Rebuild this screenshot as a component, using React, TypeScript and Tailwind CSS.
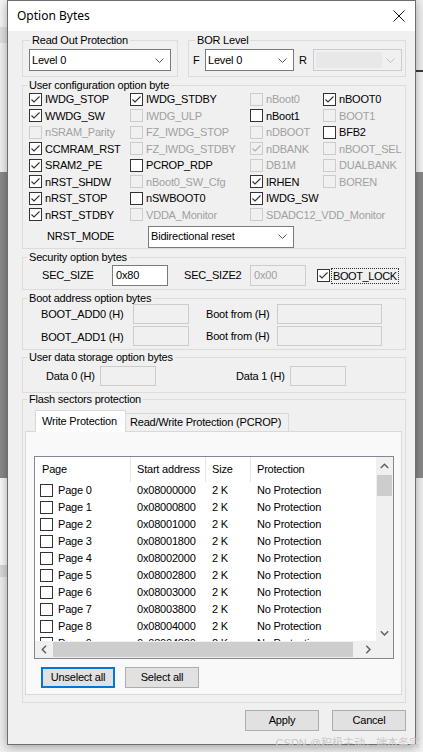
import React from "react";

type BoxProps = { checked?: boolean; disabled?: boolean };

function Box({ checked, disabled }: BoxProps) {
  return (
    <span
      className={`w-[13px] h-[13px] shrink-0 border flex items-center justify-center ${
        disabled ? "border-[#cccccc] bg-[#f0f0f0]" : "border-[#333333] bg-white"
      }`}
    >
      {checked && (
        <svg width="11" height="11" viewBox="0 0 11 11">
          <polyline
            points="1.5,5.5 4,8 9.5,2.5"
            fill="none"
            stroke={disabled ? "#b0b0b0" : "#333333"}
            strokeWidth="1.1"
          />
        </svg>
      )}
    </span>
  );
}

type ChkProps = { label: string; checked?: boolean; disabled?: boolean };

function Chk({ label, checked, disabled }: ChkProps) {
  return (
    <div className="flex items-center gap-[3px] h-full whitespace-nowrap">
      <Box checked={checked} disabled={disabled} />
      <span className={disabled ? "text-[#a0a0a0]" : "text-black"}>{label}</span>
    </div>
  );
}

function ChevronDown({ color = "#555555" }: { color?: string }) {
  return (
    <svg width="9" height="5" viewBox="0 0 9 5">
      <polyline points="0.5,0.5 4.5,4.5 8.5,0.5" fill="none" stroke={color} strokeWidth="1" />
    </svg>
  );
}

function ScrollArrow({ dir }: { dir: "up" | "down" | "left" | "right" }) {
  const pts =
    dir === "up"
      ? "0.8,5 4.5,1.3 8.2,5"
      : dir === "down"
      ? "0.8,1.3 4.5,5 8.2,1.3"
      : dir === "left"
      ? "5,0.8 1.3,4.5 5,8.2"
      : "1.3,0.8 5,4.5 1.3,8.2";
  const w = dir === "up" || dir === "down" ? 9 : 6;
  const h = dir === "up" || dir === "down" ? 6 : 9;
  return (
    <svg width={w} height={h} viewBox={`0 0 ${w} ${h}`}>
      <polyline points={pts} fill="none" stroke="#606060" strokeWidth="1.5" />
    </svg>
  );
}

function Combo({ value, className }: { value: string; className: string }) {
  return (
    <div
      className={`h-[22px] border border-[#7a7a7a] bg-white flex items-center justify-between pl-[2px] pr-[6px] ${className}`}
    >
      <span className="whitespace-nowrap">{value}</span>
      <ChevronDown />
    </div>
  );
}

function DisabledCombo({ className }: { className: string }) {
  return (
    <div className={`h-[22px] border border-[#cccccc] bg-[#f0f0f0] flex items-center p-[2px] pr-[6px] ${className}`}>
      <div className="h-full w-[66px] bg-[#e8e8e8]" />
      <div className="flex-1" />
      <ChevronDown color="#c0c0c0" />
    </div>
  );
}

function Input({ value, disabled, className }: { value?: string; disabled?: boolean; className: string }) {
  return (
    <div
      className={`border flex items-center pl-[3px] ${
        disabled ? "border-[#cccccc] bg-[#f0f0f0] text-[#a0a0a0]" : "border-[#7a7a7a] bg-white text-black"
      } ${className}`}
    >
      {value}
    </div>
  );
}

const userCfg: (ChkProps | null)[][] = [
  [
    { label: "IWDG_STOP", checked: true },
    { label: "IWDG_STDBY", checked: true },
    { label: "nBoot0", disabled: true },
    { label: "nBOOT0", checked: true },
  ],
  [
    { label: "WWDG_SW", checked: true },
    { label: "IWDG_ULP", disabled: true },
    { label: "nBoot1" },
    { label: "BOOT1", disabled: true },
  ],
  [
    { label: "nSRAM_Parity", disabled: true },
    { label: "FZ_IWDG_STOP", disabled: true },
    { label: "nDBOOT", disabled: true },
    { label: "BFB2" },
  ],
  [
    { label: "CCMRAM_RST", checked: true },
    { label: "FZ_IWDG_STDBY", disabled: true },
    { label: "nDBANK", disabled: true, checked: true },
    { label: "nBOOT_SEL", disabled: true },
  ],
  [
    { label: "SRAM2_PE", checked: true },
    { label: "PCROP_RDP" },
    { label: "DB1M", disabled: true },
    { label: "DUALBANK", disabled: true },
  ],
  [
    { label: "nRST_SHDW", checked: true },
    { label: "nBoot0_SW_Cfg", disabled: true },
    { label: "IRHEN", checked: true },
    { label: "BOREN", disabled: true },
  ],
  [
    { label: "nRST_STOP", checked: true },
    { label: "nSWBOOT0" },
    { label: "IWDG_SW", checked: true },
    null,
  ],
  [
    { label: "nRST_STDBY", checked: true },
    { label: "VDDA_Monitor", disabled: true },
    { label: "SDADC12_VDD_Monitor", disabled: true },
    null,
  ],
];

const pages = Array.from({ length: 10 }, (_, i) => ({
  name: `Page ${i}`,
  addr: "0x" + (0x08000000 + i * 0x800).toString(16).toUpperCase().padStart(8, "0"),
}));

function Btn({ label, focused, className = "" }: { label: string; focused?: boolean; className?: string }) {
  return (
    <div
      className={`w-[74px] h-[21px] bg-[#e1e1e1] flex items-center justify-center ${
        focused ? "border-2 border-[#0078d7]" : "border border-[#adadad]"
      } ${className}`}
    >
      {label}
    </div>
  );
}

export default function App() {
  return (
    <div className="relative w-[423px] h-[752px] overflow-hidden flex bg-[#f0f0f0] font-['Liberation_Sans',Arial,sans-serif] text-[11px] tracking-[-0.2px] text-black">
      {/* left background strip */}
      <div className="w-[7px] shrink-0 flex flex-col">
        <div className="h-[27px] bg-[#f7f7f7]" />
        <div className="h-[16px] bg-[#e2e2e2]" />
        <div className="h-[129px] bg-[#f3f3f3]" />
        <div className="h-[306px] bg-[#8a8a8a]" />
        <div className="h-[87px] bg-[#fbfbfb]" />
        <div className="h-[12px] bg-[#dadada]" />
        <div className="flex-1 bg-[#f0f0f0]" />
      </div>

      {/* dialog */}
      <div className="relative z-10 w-[409px] h-[745px] shrink-0 border border-[#6e6e6e] bg-[#f0f0f0] flex flex-col shadow-[0_2px_10px_rgba(0,0,0,0.35)]">
        {/* title bar */}
        <div className="h-[30px] shrink-0 bg-white flex items-center justify-between pl-[9px] pr-[10px]">
          <span className="font-['Noto_Sans',sans-serif] text-[12px] tracking-normal">Option Bytes</span>
          <svg width="12" height="12" viewBox="0 0 12 12">
            <line x1="0.5" y1="0.5" x2="11.5" y2="11.5" stroke="#111" strokeWidth="1" />
            <line x1="11.5" y1="0.5" x2="0.5" y2="11.5" stroke="#111" strokeWidth="1" />
          </svg>
        </div>

        <div className="flex flex-col pl-[14px] pr-[9px]">
          {/* row 1 */}
          <div className="mt-[2px] flex gap-[10px]">
            <fieldset className="w-[156px] border border-[#dcdcdc]">
              <legend className="ml-[7px] px-[2px] leading-[14px]">Read Out Protection</legend>
              <div className="pt-[2px] pb-[5px] pl-[6px]">
                <Combo value="Level 0" className="w-[142px]" />
              </div>
            </fieldset>
            <fieldset className="flex-1 border border-[#dcdcdc]">
              <legend className="ml-[6px] px-[2px] leading-[14px]">BOR Level</legend>
              <div className="pt-[2px] pb-[5px] pl-[4px] flex items-center">
                <span className="w-[12px]">F</span>
                <Combo value="Level 0" className="w-[89px]" />
                <span className="ml-[5px] w-[14px]">R</span>
                <DisabledCombo className="w-[89px]" />
              </div>
            </fieldset>
          </div>

          {/* user configuration */}
          <fieldset className="mt-[1px] border border-[#dcdcdc]">
            <legend className="ml-[4px] px-[2px] leading-[14px]">User configuration option byte</legend>
            <div className="mt-[-1px] pl-[6px] pb-[1px]">
              {userCfg.map((row, ri) => (
                <div key={ri} className="grid grid-cols-[101px_120px_73px_1fr] h-[16.5px]">
                  {row.map((c, ci) => (
                    <div key={ci} className="h-full">
                      {c && <Chk {...c} />}
                    </div>
                  ))}
                </div>
              ))}
              <div className="mt-[3px] h-[21px] flex items-center">
                <span className="w-[119px] pl-[18px] shrink-0">NRST_MODE</span>
                <Combo value="Bidirectional reset" className="w-[146px] h-[21px]" />
              </div>
            </div>
          </fieldset>

          {/* security */}
          <fieldset className="mt-[1px] border border-[#dcdcdc]">
            <legend className="ml-[4px] px-[2px] leading-[14px]">Security option bytes</legend>
            <div className="mt-[1px] pb-[3px] flex items-center h-[24px]">
              <span className="w-[89px] pl-[19px] shrink-0">SEC_SIZE</span>
              <Input value="0x80" className="w-[56px] h-[21px]" />
              <span className="w-[82px] pl-[16px] shrink-0">SEC_SIZE2</span>
              <Input value="0x00" disabled className="w-[56px] h-[21px]" />
              <span className="ml-[11px]">
                <Box checked />
              </span>
              <span className="ml-[1px] px-[1px] border border-dotted border-[#333] leading-[14px] tracking-[-0.4px]">BOOT_LOCK</span>
            </div>
          </fieldset>

          {/* boot address */}
          <fieldset className="mt-[1px] border border-[#dcdcdc]">
            <legend className="ml-[4px] px-[2px] leading-[14px]">Boot address option bytes</legend>
            <div className="mt-[-1px] pb-[3px] flex flex-col gap-[2px]">
              <div className="flex items-center h-[20px]">
                <span className="w-[110px] pl-[18px] shrink-0">BOOT_ADD0 (H)</span>
                <Input disabled className="w-[56px] h-[20px]" />
                <span className="w-[88px] pl-[17px] shrink-0">Boot from (H)</span>
                <Input disabled className="w-[105px] h-[20px]" />
              </div>
              <div className="flex items-center h-[20px]">
                <span className="w-[110px] pl-[18px] shrink-0 pt-[2px]">BOOT_ADD1 (H)</span>
                <Input disabled className="w-[56px] h-[20px]" />
                <span className="w-[88px] pl-[17px] shrink-0">Boot from (H)</span>
                <Input disabled className="w-[105px] h-[20px]" />
              </div>
            </div>
          </fieldset>

          {/* user data */}
          <fieldset className="border border-[#dcdcdc]">
            <legend className="ml-[4px] px-[2px] leading-[14px]">User data storage option bytes</legend>
            <div className="mt-[2px] pb-[6px] flex items-center h-[26px]">
              <span className="w-[77px] pl-[23px] shrink-0">Data 0 (H)</span>
              <Input disabled className="w-[56px] h-[20px]" />
              <span className="w-[134px] pl-[80px] shrink-0">Data 1 (H)</span>
              <Input disabled className="w-[56px] h-[20px]" />
            </div>
          </fieldset>

          {/* flash sectors */}
          <fieldset className="mt-[-1px] border border-[#dcdcdc]">
            <legend className="ml-[4px] px-[2px] leading-[14px]">Flash sectors protection</legend>
            <div className="mt-[4px] pl-[2px] pr-[3px] pb-[7px] flex flex-col">
              {/* tabs */}
              <div className="h-[21px] flex items-start pl-[10px]">
                <div className="relative z-10 w-[91px] h-[22px] bg-white border border-b-0 border-[#d9d9d9] pl-[6px] flex items-center">
                  Write Protection
                </div>
                <div className="mt-[3px] w-[163px] h-[18px] bg-[#f0f0f0] border border-l-0 border-b-0 border-[#d9d9d9] pl-[4px] flex items-center">
                  Read/Write Protection (PCROP)
                </div>
              </div>
              {/* panel */}
              <div className="border border-[#d9d9d9] bg-[#f9f9f9] pt-[24px] pl-[8px] pb-[6px] flex flex-col">
                <div className="w-[360px] h-[203px] border border-[#828790] bg-white flex flex-col">
                  <div className="h-[184px] flex">
                    <div className="w-[341px] overflow-hidden flex flex-col">
                      <div className="h-[25px] shrink-0 flex">
                        <div className="w-[96px] border-r border-[#e5e5e5] pl-[7px] flex items-center">Page</div>
                        <div className="w-[75px] border-r border-[#e5e5e5] pl-[6px] flex items-center">Start address</div>
                        <div className="w-[45px] border-r border-[#e5e5e5] pl-[6px] flex items-center">Size</div>
                        <div className="flex-1 pl-[6px] flex items-center">Protection</div>
                      </div>
                      {pages.map((p) => (
                        <div key={p.name} className="h-[17px] shrink-0 flex items-center">
                          <div className="w-[96px] pl-[5px] flex items-center gap-[5px]">
                            <Box />
                            <span>{p.name}</span>
                          </div>
                          <div className="w-[75px] pl-[6px]">{p.addr}</div>
                          <div className="w-[45px] pl-[6px]">2 K</div>
                          <div className="flex-1 pl-[6px] whitespace-nowrap">No Protection</div>
                        </div>
                      ))}
                    </div>
                    {/* vertical scrollbar */}
                    <div className="w-[17px] bg-[#f0f0f0] flex flex-col">
                      <div className="h-[17px] flex items-center justify-center">
                        <ScrollArrow dir="up" />
                      </div>
                      <div className="mt-[1px] mx-[1px] h-[21px] bg-[#cdcdcd]" />
                      <div className="flex-1" />
                      <div className="h-[17px] flex items-center justify-center">
                        <ScrollArrow dir="down" />
                      </div>
                    </div>
                  </div>
                  {/* horizontal scrollbar */}
                  <div className="h-[17px] flex bg-[#f0f0f0]">
                    <div className="w-[17px] flex items-center justify-center">
                      <ScrollArrow dir="left" />
                    </div>
                    <div className="ml-[1px] my-[1px] w-[300px] bg-[#cdcdcd]" />
                    <div className="flex-1" />
                    <div className="w-[17px] flex items-center justify-center">
                      <ScrollArrow dir="right" />
                    </div>
                    <div className="w-[17px] bg-[#f0f0f0]" />
                  </div>
                </div>
                <div className="mt-[8px] pl-[7px] flex gap-[10px]">
                  <Btn label="Unselect all" focused />
                  <Btn label="Select all" />
                </div>
              </div>
            </div>
          </fieldset>

          <div className="mt-[7px] flex justify-end gap-[13px]">
            <Btn label="Apply" />
            <Btn label="Cancel" />
          </div>
        </div>
      </div>

      {/* right background strip */}
      <div className="flex-1 flex flex-col">
        <div className="h-[70px] bg-[#f0f0f0]" />
        <div className="h-[2px] bg-[#3a3a3a]" />
        <div className="h-[100px] bg-[#f7f7f7]" />
        <div className="h-[306px] bg-[#8a8a8a]" />
        <div className="flex-1 bg-[#f2f2f2]" />
      </div>

      {/* watermark */}
      <span className="absolute z-20 right-[3px] bottom-[1px] text-[11px] tracking-normal text-[#c9c9c9] font-['Liberation_Sans','Noto_Sans_CJK_SC',sans-serif] whitespace-nowrap">
        CSDN @积极主动，端本务实
      </span>
    </div>
  );
}
